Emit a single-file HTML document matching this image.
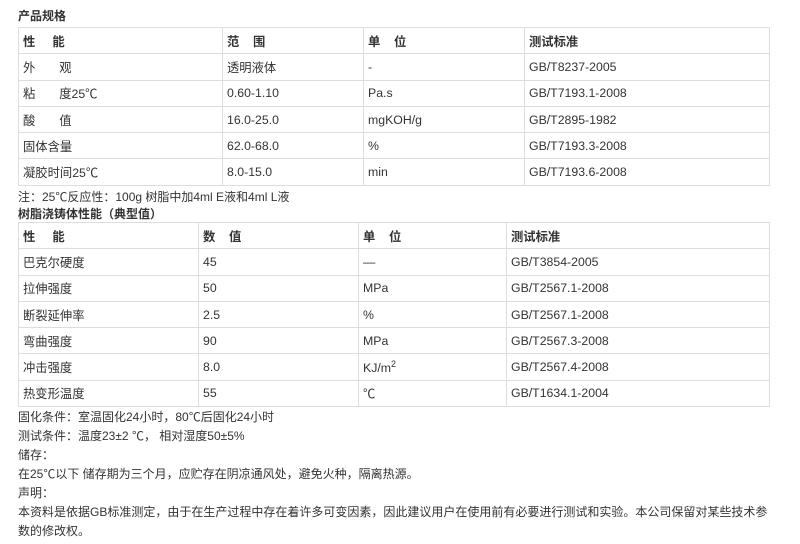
<!DOCTYPE html>
<html><head><meta charset="utf-8"><style>
body{margin:0;background:#fff;color:#333;font-family:"Liberation Sans","Noto Sans CJK SC",sans-serif;font-size:12px;}
.t{position:absolute;left:18px;white-space:nowrap;}
table{position:absolute;left:18px;border-collapse:collapse;table-layout:fixed;}
td{border:1px solid #ddd;height:25.3px;padding:0 0 0 4px;white-space:nowrap;font-size:12.3px;}
</style></head><body>
<div class="t" style="top:7px;font-weight:bold">产品规格</div>
<table style="top:27px;width:751px">
<colgroup><col style="width:204px"><col style="width:141px"><col style="width:161px"><col style="width:245px"></colgroup>
<tr style="font-weight:bold"><td>性&nbsp;&nbsp;&nbsp;&nbsp;&nbsp;能</td><td>范&nbsp;&nbsp;&nbsp;&nbsp;围</td><td>单&nbsp;&nbsp;&nbsp;&nbsp;位</td><td>测试标准</td></tr>
<tr><td>外&nbsp;&nbsp;&nbsp;&nbsp;&nbsp;&nbsp;&nbsp;观</td><td>透明液体</td><td>-</td><td>GB/T8237-2005</td></tr>
<tr><td>粘&nbsp;&nbsp;&nbsp;&nbsp;&nbsp;&nbsp;&nbsp;度25℃</td><td>0.60-1.10</td><td>Pa.s</td><td>GB/T7193.1-2008</td></tr>
<tr><td>酸&nbsp;&nbsp;&nbsp;&nbsp;&nbsp;&nbsp;&nbsp;值</td><td>16.0-25.0</td><td>mgKOH/g</td><td>GB/T2895-1982</td></tr>
<tr><td>固体含量</td><td>62.0-68.0</td><td>%</td><td>GB/T7193.3-2008</td></tr>
<tr><td>凝胶时间25℃</td><td>8.0-15.0</td><td>min</td><td>GB/T7193.6-2008</td></tr>
</table>
<div class="t" style="top:188px">注：25℃反应性：100g 树脂中加4ml E液和4ml L液</div>
<div class="t" style="top:205px;font-weight:bold">树脂浇铸体性能（典型值）</div>
<table style="top:222px;width:751px">
<colgroup><col style="width:180px"><col style="width:160px"><col style="width:148px"><col style="width:263px"></colgroup>
<tr style="font-weight:bold"><td>性&nbsp;&nbsp;&nbsp;&nbsp;&nbsp;能</td><td>数&nbsp;&nbsp;&nbsp;&nbsp;值</td><td>单&nbsp;&nbsp;&nbsp;&nbsp;位</td><td>测试标准</td></tr>
<tr><td>巴克尔硬度</td><td>45</td><td>—</td><td>GB/T3854-2005</td></tr>
<tr><td>拉伸强度</td><td>50</td><td>MPa</td><td>GB/T2567.1-2008</td></tr>
<tr><td>断裂延伸率</td><td>2.5</td><td>%</td><td>GB/T2567.1-2008</td></tr>
<tr><td>弯曲强度</td><td>90</td><td>MPa</td><td>GB/T2567.3-2008</td></tr>
<tr><td>冲击强度</td><td>8.0</td><td>KJ/m<sup style="font-size:9px">2</sup></td><td>GB/T2567.4-2008</td></tr>
<tr><td>热变形温度</td><td>55</td><td>℃</td><td>GB/T1634.1-2004</td></tr>
</table>
<div class="t" style="top:408px">固化条件：室温固化24小时，80℃后固化24小时</div>
<div class="t" style="top:427px">测试条件：温度23±2 ℃， 相对湿度50±5%</div>
<div class="t" style="top:446px">储存：</div>
<div class="t" style="top:465px">在25℃以下 储存期为三个月，应贮存在阴凉通风处，避免火种，隔离热源。</div>
<div class="t" style="top:484px">声明：</div>
<div class="t" style="top:503px">本资料是依据GB标准测定，由于在生产过程中存在着许多可变因素，因此建议用户在使用前有必要进行测试和实验。本公司保留对某些技术参</div>
<div class="t" style="top:522px">数的修改权。</div>
</body></html>
